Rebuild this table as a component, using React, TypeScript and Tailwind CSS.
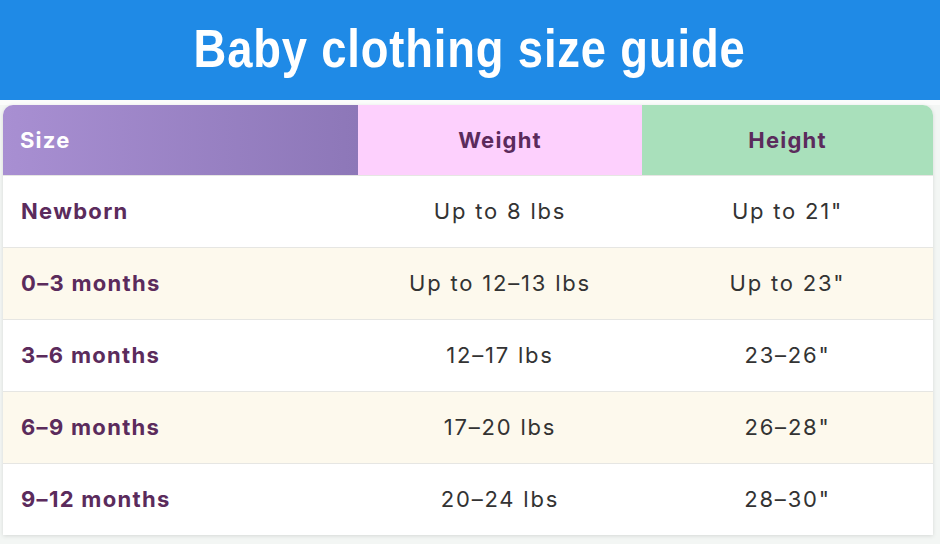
const rows = [
  { size: "Newborn", weight: "Up to 8 lbs", height: "Up to 21\"" },
  { size: "0–3 months", weight: "Up to 12–13 lbs", height: "Up to 23\"" },
  { size: "3–6 months", weight: "12–17 lbs", height: "23–26\"" },
  { size: "6–9 months", weight: "17–20 lbs", height: "26–28\"" },
  { size: "9–12 months", weight: "20–24 lbs", height: "28–30\"" },
];

export default function App() {
  return (
    <div className="w-[940px] h-[544px] overflow-hidden bg-[#f3f6f4] font-['Inter',sans-serif]">
      <div className="h-[100px] bg-[#1f8ae6] flex items-center justify-center">
        <h1 className="inline-block scale-x-[0.84] text-white font-bold text-[54px] leading-none tracking-[1px] font-['Liberation_Sans',sans-serif] pb-[4px] whitespace-nowrap">
          Baby clothing size guide
        </h1>
      </div>
      <div className="h-[5px] bg-[#fbfcfb]" />
      <div className="ml-[3px] w-[930px] rounded-t-[10px] overflow-hidden bg-white shadow-[0_1px_4px_rgba(0,0,0,0.12)]">
        <div className="flex h-[70px] text-[22px] font-bold tracking-[1.2px]">
          <div className="w-[355px] flex items-center pl-[17px] text-white bg-gradient-to-r from-[#a88fd2] to-[#8d77b8]">
            Size
          </div>
          <div className="w-[284px] flex items-center justify-center text-[#5b2b5c] bg-[#fdd0fd]">
            Weight
          </div>
          <div className="flex-1 flex items-center justify-center text-[#5b2b5c] bg-[#a9e0bb]">
            Height
          </div>
        </div>
        {rows.map((r, i) => (
          <div
            key={r.size}
            className={`flex h-[72px] items-center text-[22px] border-t border-[#e6e6e3] ${i % 2 === 1 ? "bg-[#fdf9ed]" : "bg-white"}`}
          >
            <div className="w-[355px] pl-[18px] font-bold tracking-[1.3px] text-[#5b2b5c]">{r.size}</div>
            <div className="w-[284px] text-center tracking-[1.8px] text-[#333333]">{r.weight}</div>
            <div className="flex-1 text-center tracking-[1.8px] text-[#333333]">{r.height}</div>
          </div>
        ))}
      </div>
    </div>
  );
}
